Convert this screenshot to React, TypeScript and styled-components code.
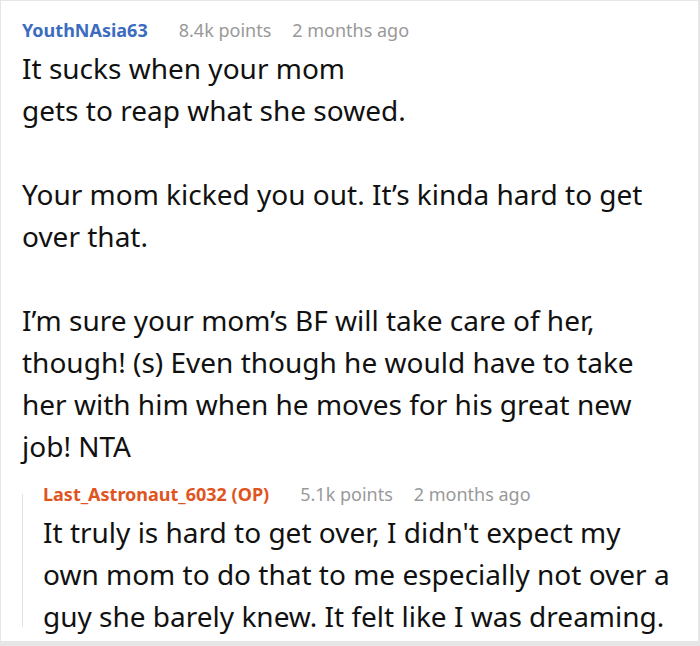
import React from "react";
import styled, { createGlobalStyle } from "styled-components";

const Global = createGlobalStyle`
  html, body { margin: 0; padding: 0; background: #fff; }
  body { font-family: "Noto Sans", "Open Sans", sans-serif; }
`;

const Frame = styled.div`
  box-sizing: border-box;
  width: 700px;
  height: 646px;
  border-style: solid;
  border-color: #e6e6e6;
  border-width: 1px 2px 5px 1px;
  padding: 13px 23px 0 21px;
  overflow: hidden;
`;

const Meta = styled.div`
  display: flex;
  align-items: baseline;
  gap: 21px;
  font-size: 18px;
  line-height: 32px;
`;

const Author = styled.span<{ $op?: boolean }>`
  font-weight: 700;
  margin-right: 10px;
  color: ${(p) => (p.$op ? "#e0541e" : "#3b6cc0")};
`;

const Info = styled.span`
  color: #999;
`;

const Body = styled.div`
  margin-top: 1px;
  font-size: 28px;
  line-height: 42px;
  color: #111;
  p { margin: 0 0 42px; }
  p:last-child { margin-bottom: 0; }
`;

const Reply = styled.div`
  position: relative;
  margin-top: 11px;
  padding-left: 21px;
  &::before {
    content: "";
    position: absolute;
    left: 0;
    top: 16px;
    bottom: 10px;
    width: 1px;
    background: #e3e3e3;
  }
`;

function Comment({
  author,
  op,
  points,
  time,
  paragraphs,
}: {
  author: string;
  op?: boolean;
  points: string;
  time: string;
  paragraphs: React.ReactNode[];
}) {
  return (
    <div>
      <Meta>
        <Author $op={op}>{author}</Author>
        <Info>{points}</Info>
        <Info>{time}</Info>
      </Meta>
      <Body>
        {paragraphs.map((p, i) => (
          <p key={i}>{p}</p>
        ))}
      </Body>
    </div>
  );
}

export default function App() {
  return (
    <>
      <Global />
      <Frame>
        <Comment
          author="YouthNAsia63"
          points="8.4k points"
          time="2 months ago"
          paragraphs={[
            <>
              It sucks when your mom
              <br />
              gets to reap what she sowed.
            </>,
            "Your mom kicked you out. It’s kinda hard to get over that.",
            "I’m sure your mom’s BF will take care of her, though! (s) Even though he would have to take her with him when he moves for his great new job! NTA",
          ]}
        />
        <Reply>
          <Comment
            author="Last_Astronaut_6032 (OP)"
            op
            points="5.1k points"
            time="2 months ago"
            paragraphs={[
              "It truly is hard to get over, I didn't expect my own mom to do that to me especially not over a guy she barely knew. It felt like I was dreaming.",
            ]}
          />
        </Reply>
      </Frame>
    </>
  );
}
